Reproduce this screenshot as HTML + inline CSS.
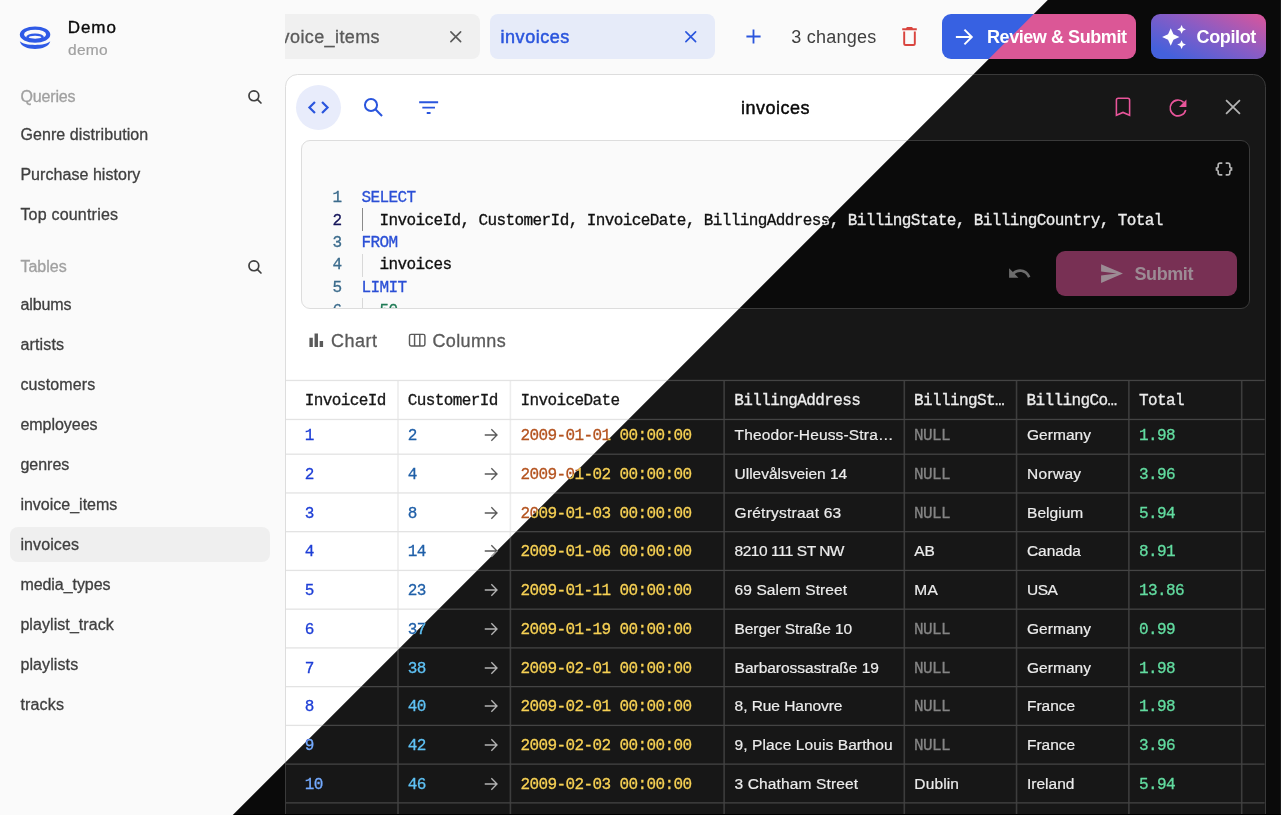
<!DOCTYPE html>
<html lang="en"><head><meta charset="utf-8"><title>invoices</title>
<style>
html,body{margin:0;padding:0;background:#fafafa;}
body{width:1281px;height:815px;overflow:hidden;position:relative;font-family:"Liberation Sans",sans-serif;}
.layer{will-change:transform;position:absolute;left:0;top:0;width:1281px;height:815px;overflow:hidden;background:var(--bg);}
.b{position:absolute;display:block;}
.t{position:absolute;white-space:pre;display:block;}
.light{--bottom:transparent;--redge:transparent;
 --bg:#fafafa;--side:#fafafa;--panel:#ffffff;--code:#fafafa;--border:#dddddd;--grid:#e3e3e3;--gridv:#ededed;
 --fg:#171717;--fg2:#3f3f3f;--fg3:#5a5a5a;--title:#0a0a0a;--muted:#a0a0a0;--sel:#efefef;
 --tab:#f0f0f0;--tabsel:#e6ebf9;--pri:#2a55dd;--danger:#d9443e;--review:#3761e2;
 --copilot:linear-gradient(25deg,#3f63e0 10%,#8a5cc4 55%,#d9559a 100%);
 --btnsel:#e8ecfb;--accent:#d6448c;--kw:#2a4fd6;--codefg:#101010;--ln:#3b6b8c;--lnact:#15155a;--num:#1f7a55;
 --guide:#d8d8d8;--guideact:#8a8a8a;--dis:#bdbdbd;--submit:#e9b6cf;--submitfg:#fff;
 --hdr:#171717;--id:#1d3ed6;--fk:#1f5fa8;--date:#b4531f;--cell:#262626;--null:#a0a0a0;--money:#1f8a55;--logo:#2f5ae6;
}
.dark{--bottom:#000;--redge:#1b1b1b;
 --bg:#0a0a0a;--side:#0a0a0a;--panel:#171717;--code:#0b0b0b;--border:#3a3a3a;--grid:#444444;--gridv:#3d3d3d;
 --fg:#ededed;--fg2:#d4d4d4;--fg3:#b4b4b4;--title:#fafafa;--muted:#737373;--sel:#262626;
 --tab:#262626;--tabsel:#3a2030;--pri:#e8629f;--danger:#ef6b63;--review:#db5796;
 --copilot:linear-gradient(25deg,#4461dc 12%,#8a5cc4 55%,#dc559a 100%);
 --btnsel:#3a2030;--accent:#e8559a;--kw:#f070a8;--codefg:#ececec;--ln:#6a8aa0;--lnact:#e0e0e0;--num:#6ad8a0;
 --guide:#333;--guideact:#777;--dis:#6c6c6c;--submit:#783054;--submitfg:#9c8b94;
 --hdr:#ececec;--id:#74aaff;--fk:#5fc2f5;--date:#f7d154;--cell:#ececec;--null:#858585;--money:#62dca0;--logo:#e8629f;
 clip-path:polygon(1047.75px 0,1281px 0,1281px 815px,232.75px 815px);
}
</style></head>
<body>
<div class="layer light">
<div class="b" style="left:0px;top:0px;width:285px;height:815px;background:var(--side)"></div>
<svg class="b" style="left:18px;top:22px" width="34" height="30" viewBox="18 22 34 30" fill="var(--logo)" fill-rule="evenodd"><path d="M19.8 34.6a15.25 8.2 0 1 0 30.5 0a15.25 8.2 0 1 0 -30.5 0Z M24 34.4a11.05 4.7 0 1 0 22.1 0a11.05 4.7 0 1 0 -22.1 0Z"/><path d="M26.2 36.95a8.85 3.55 0 1 0 17.7 0a8.85 3.55 0 1 0 -17.7 0Z M28.7 37.2a6.35 1.45 0 1 0 12.7 0a6.35 1.45 0 1 0 -12.7 0Z"/><path d="M19.8 41.2 C22 51.5, 48 51.5, 50.3 41.2 C46 46.1, 24 46.1, 19.8 41.2Z"/></svg>
<span class="t" style="left:67.80px;top:18px;font:400 17px/20px 'Liberation Sans',sans-serif;color:var(--title);letter-spacing:0.913px;-webkit-text-stroke:0.35px currentColor;">Demo</span>
<span class="t" style="left:68.00px;top:40px;font:400 15.5px/20px 'Liberation Sans',sans-serif;color:var(--muted);letter-spacing:0.307px;-webkit-text-stroke:0.2px currentColor;">demo</span>
<span class="t" style="left:20.40px;top:87px;font:400 16px/20px 'Liberation Sans',sans-serif;color:var(--muted);letter-spacing:-0.146px;-webkit-text-stroke:0.3px currentColor;">Queries</span>
<span class="t" style="left:20.40px;top:125px;font:400 16px/20px 'Liberation Sans',sans-serif;color:var(--fg2);letter-spacing:0.089px;-webkit-text-stroke:0.3px currentColor;">Genre distribution</span>
<span class="t" style="left:20.40px;top:165px;font:400 16px/20px 'Liberation Sans',sans-serif;color:var(--fg2);letter-spacing:0.052px;-webkit-text-stroke:0.3px currentColor;">Purchase history</span>
<span class="t" style="left:20.40px;top:205px;font:400 16px/20px 'Liberation Sans',sans-serif;color:var(--fg2);letter-spacing:0.203px;-webkit-text-stroke:0.3px currentColor;">Top countries</span>
<span class="t" style="left:20.40px;top:257px;font:400 16px/20px 'Liberation Sans',sans-serif;color:var(--muted);letter-spacing:0.025px;-webkit-text-stroke:0.3px currentColor;">Tables</span>
<svg class="b" style="left:246.35px;top:88.25px" width="17.8" height="17.8" viewBox="0 0 24 24" fill="none" stroke="var(--fg2)" stroke-width="2.3" stroke-linecap="round" stroke-linejoin="round"><circle cx="10.6" cy="10.6" r="6.6"/><path d="m20.2 20.2-4.9-4.9"/></svg>
<svg class="b" style="left:246.35px;top:258.25px" width="17.8" height="17.8" viewBox="0 0 24 24" fill="none" stroke="var(--fg2)" stroke-width="2.3" stroke-linecap="round" stroke-linejoin="round"><circle cx="10.6" cy="10.6" r="6.6"/><path d="m20.2 20.2-4.9-4.9"/></svg>
<div class="b" style="left:10px;top:527.3px;width:260px;height:34.6px;background:var(--sel);border-radius:8px"></div>
<span class="t" style="left:20.40px;top:295px;font:400 16px/20px 'Liberation Sans',sans-serif;color:var(--fg2);letter-spacing:-0.080px;-webkit-text-stroke:0.3px currentColor;">albums</span>
<span class="t" style="left:20.40px;top:335px;font:400 16px/20px 'Liberation Sans',sans-serif;color:var(--fg2);letter-spacing:0.175px;-webkit-text-stroke:0.3px currentColor;">artists</span>
<span class="t" style="left:20.40px;top:375px;font:400 16px/20px 'Liberation Sans',sans-serif;color:var(--fg2);letter-spacing:0.123px;-webkit-text-stroke:0.3px currentColor;">customers</span>
<span class="t" style="left:20.40px;top:415px;font:400 16px/20px 'Liberation Sans',sans-serif;color:var(--fg2);letter-spacing:-0.020px;-webkit-text-stroke:0.3px currentColor;">employees</span>
<span class="t" style="left:20.40px;top:455px;font:400 16px/20px 'Liberation Sans',sans-serif;color:var(--fg2);letter-spacing:-0.004px;-webkit-text-stroke:0.3px currentColor;">genres</span>
<span class="t" style="left:20.40px;top:495px;font:400 16px/20px 'Liberation Sans',sans-serif;color:var(--fg2);letter-spacing:-0.002px;-webkit-text-stroke:0.3px currentColor;">invoice_items</span>
<span class="t" style="left:20.40px;top:535px;font:400 16px/20px 'Liberation Sans',sans-serif;color:var(--fg2);letter-spacing:0.099px;-webkit-text-stroke:0.3px currentColor;">invoices</span>
<span class="t" style="left:20.40px;top:575px;font:400 16px/20px 'Liberation Sans',sans-serif;color:var(--fg2);letter-spacing:-0.056px;-webkit-text-stroke:0.3px currentColor;">media_types</span>
<span class="t" style="left:20.40px;top:615px;font:400 16px/20px 'Liberation Sans',sans-serif;color:var(--fg2);letter-spacing:0.073px;-webkit-text-stroke:0.3px currentColor;">playlist_track</span>
<span class="t" style="left:20.40px;top:655px;font:400 16px/20px 'Liberation Sans',sans-serif;color:var(--fg2);letter-spacing:0.110px;-webkit-text-stroke:0.3px currentColor;">playlists</span>
<span class="t" style="left:20.40px;top:695px;font:400 16px/20px 'Liberation Sans',sans-serif;color:var(--fg2);letter-spacing:0.171px;-webkit-text-stroke:0.3px currentColor;">tracks</span>
<div class="b" style="left:285px;top:14px;width:195.3px;height:45px;background:var(--tab);border-radius:0 8px 8px 0"></div>
<div class="b" style="left:285px;top:14px;width:195px;height:45px;overflow:hidden"><span class="t" style="left:-19.20px;top:13px;font:400 18px/20px 'Liberation Sans',sans-serif;color:var(--fg3);letter-spacing:0.396px;-webkit-text-stroke:0.3px currentColor;">invoice_items</span></div>
<svg class="b" style="left:445.75px;top:26.85px;color:var(--fg3)" width="19.5" height="19.5" viewBox="0 0 24 24" fill="none" stroke="var(--fg3)" stroke-width="2.0" stroke-linecap="round" stroke-linejoin="miter"><path d="M6 6 18 18M18 6 6 18"/></svg>
<div class="b" style="left:490.2px;top:14px;width:225.2px;height:45px;background:var(--tabsel);border-radius:8px"></div>
<span class="t" style="left:500.50px;top:27px;font:400 18px/20px 'Liberation Sans',sans-serif;color:var(--pri);letter-spacing:0.546px;-webkit-text-stroke:0.5px currentColor;">invoices</span>
<svg class="b" style="left:680.75px;top:26.85px;color:var(--pri)" width="19.5" height="19.5" viewBox="0 0 24 24" fill="none" stroke="var(--pri)" stroke-width="2.0" stroke-linecap="round" stroke-linejoin="miter"><path d="M6 6 18 18M18 6 6 18"/></svg>
<svg class="b" style="left:740.50px;top:23.90px;color:var(--pri)" width="25" height="25" viewBox="0 0 24 24" fill="none" stroke="var(--pri)" stroke-width="1.75" stroke-linecap="butt" stroke-linejoin="miter"><path d="M12 5.2V18.8M5.2 12H18.8"/></svg>
<span class="t" style="left:791.20px;top:27px;font:400 18px/20px 'Liberation Sans',sans-serif;color:var(--fg2);letter-spacing:0.237px;">3 changes</span>
<svg class="b" style="left:896.90px;top:23.90px;color:var(--danger)" width="25" height="25" viewBox="0 0 24 24" fill="none" stroke="var(--danger)" stroke-width="1.85" stroke-linecap="butt" stroke-linejoin="miter"><path d="M6.9 7.2V18.6a1.5 1.5 0 0 0 1.5 1.5h7.2a1.5 1.5 0 0 0 1.5-1.5V7.2M5 5.1H19M9.3 4.9 10 3.9H14L14.7 4.9" /></svg>
<div class="b" style="left:942px;top:14px;width:194.3px;height:45px;background:var(--review);border-radius:9px"></div>
<svg class="b" style="left:950.60px;top:23.50px;color:#fff" width="26" height="26" viewBox="0 0 24 24" fill="none" stroke="#fff" stroke-width="1.8" stroke-linecap="butt" stroke-linejoin="miter"><path d="M4.5 12H19M12.4 5.2 19.2 12 12.4 18.8"/></svg>
<span class="t" style="left:987.00px;top:27px;font:700 18px/20px 'Liberation Sans',sans-serif;color:#fff;letter-spacing:-0.435px;">Review &amp; Submit</span>
<div class="b" style="left:1151px;top:14px;width:114.5px;height:45px;background:var(--copilot);border-radius:9px"></div>
<svg class="b" style="left:1161.30px;top:23.50px" width="26" height="26" viewBox="0 0 24 24" fill="#fff" ><path d="M19 9l1.25-2.75L23 5l-2.75-1.25L19 1l-1.25 2.75L15 5l2.75 1.25L19 9zm-7.5.5L9 4 6.5 9.5 1 12l5.5 2.5L9 20l2.5-5.5L17 12l-5.5-2.5zM19 15l-1.25 2.75L15 19l2.75 1.25L19 23l1.25-2.75L23 19l-2.75-1.25L19 15z"/></svg>
<span class="t" style="left:1196.50px;top:27px;font:700 18px/20px 'Liberation Sans',sans-serif;color:#fff;letter-spacing:-0.354px;">Copilot</span>
<div class="b" style="left:285px;top:73.8px;width:980.5px;height:760px;background:var(--panel);border:1px solid var(--border);border-radius:12.5px;box-sizing:border-box"></div>
<div class="b" style="left:296px;top:85px;width:45px;height:45px;background:var(--btnsel);border-radius:50%"></div>
<svg class="b" style="left:306.05px;top:95.00px;color:var(--pri)" width="25" height="25" viewBox="0 0 24 24" fill="none" stroke="var(--pri)" stroke-width="2.1" stroke-linecap="butt" stroke-linejoin="miter"><path d="M8.6 6.7 3.3 12 8.6 17.3M15.4 6.7 20.7 12 15.4 17.3"/></svg>
<svg class="b" style="left:360.90px;top:95.00px;color:var(--pri)" width="25" height="25" viewBox="0 0 24 24" fill="none" stroke="var(--pri)" stroke-width="1.95" stroke-linecap="butt" stroke-linejoin="miter"><circle cx="9.6" cy="9.6" r="5.8"/><path d="M14 14 20.2 20.2"/></svg>
<svg class="b" style="left:415.95px;top:94.85px;color:var(--pri)" width="25.3" height="25.3" viewBox="0 0 24 24" fill="none" stroke="var(--pri)" stroke-width="1.75" stroke-linecap="butt" stroke-linejoin="miter"><path d="M3 6.9H21M6 12H18M10.2 17.1H13.8"/></svg>
<span class="t" style="left:741.00px;top:98px;font:400 18px/20px 'Liberation Sans',sans-serif;color:var(--title);letter-spacing:0.496px;-webkit-text-stroke:0.45px currentColor;">invoices</span>
<svg class="b" style="left:1109.50px;top:94.40px;color:var(--accent)" width="26" height="26" viewBox="0 0 24 24" fill="none" stroke="var(--accent)" stroke-width="1.45" stroke-linecap="butt" stroke-linejoin="miter"><path d="M5.9 5.6a1.7 1.7 0 0 1 1.7-1.7h8.8a1.7 1.7 0 0 1 1.7 1.7V19.7L12 17 5.9 19.7Z"/></svg>
<svg class="b" style="left:1164.70px;top:94.60px;color:var(--accent)" width="26" height="26" viewBox="0 0 24 24" fill="none" stroke="var(--accent)" stroke-width="1.5" stroke-linecap="butt" stroke-linejoin="miter"><path d="M17.2 6.8A7.3 7.3 0 1 0 19.1 13.8"/><path d="M19.8 4.2V11H13Z" fill="currentColor" stroke="none"/></svg>
<svg class="b" style="left:1219.60px;top:94.20px;color:var(--fg3)" width="26" height="26" viewBox="0 0 24 24" fill="none" stroke="var(--fg3)" stroke-width="1.6" stroke-linecap="butt" stroke-linejoin="miter"><path d="M5.6 5.6 18.4 18.4M18.4 5.6 5.6 18.4"/></svg>
<div class="b" style="left:301px;top:140.2px;width:948.5px;height:169px;background:var(--code);border:1px solid var(--border);border-radius:9px;box-sizing:border-box"></div>
<div class="b" style="left:302px;top:141px;width:946px;height:167px;overflow:hidden;border-radius:8px">
<span class="t" style="left:30.60px;top:47px;font:400 16px/20px 'Liberation Mono',monospace;color:var(--ln);letter-spacing:-0.600px;-webkit-text-stroke:0.3px currentColor;">1</span>
<span class="t" style="left:59.60px;top:47px;font:400 16px/20px 'Liberation Mono',monospace;color:var(--kw);letter-spacing:-0.600px;-webkit-text-stroke:0.3px currentColor;">SELECT</span>
<span class="t" style="left:30.60px;top:70px;font:400 16px/20px 'Liberation Mono',monospace;color:var(--lnact);letter-spacing:-0.600px;-webkit-text-stroke:0.3px currentColor;">2</span>
<span class="t" style="left:77.60px;top:70px;font:400 16px/20px 'Liberation Mono',monospace;color:var(--codefg);letter-spacing:-0.600px;-webkit-text-stroke:0.3px currentColor;">InvoiceId, CustomerId, InvoiceDate, BillingAddress, BillingState, BillingCountry, Total</span>
<div class="b" style="left:60.19999999999999px;top:67px;width:1px;height:22.5px;background:var(--guideact)"></div>
<span class="t" style="left:30.60px;top:92px;font:400 16px/20px 'Liberation Mono',monospace;color:var(--ln);letter-spacing:-0.600px;-webkit-text-stroke:0.3px currentColor;">3</span>
<span class="t" style="left:59.60px;top:92px;font:400 16px/20px 'Liberation Mono',monospace;color:var(--kw);letter-spacing:-0.600px;-webkit-text-stroke:0.3px currentColor;">FROM</span>
<span class="t" style="left:30.60px;top:114px;font:400 16px/20px 'Liberation Mono',monospace;color:var(--ln);letter-spacing:-0.600px;-webkit-text-stroke:0.3px currentColor;">4</span>
<span class="t" style="left:77.60px;top:114px;font:400 16px/20px 'Liberation Mono',monospace;color:var(--codefg);letter-spacing:-0.600px;-webkit-text-stroke:0.3px currentColor;">invoices</span>
<div class="b" style="left:60.19999999999999px;top:113px;width:1px;height:22.5px;background:var(--guide)"></div>
<span class="t" style="left:30.60px;top:137px;font:400 16px/20px 'Liberation Mono',monospace;color:var(--ln);letter-spacing:-0.600px;-webkit-text-stroke:0.3px currentColor;">5</span>
<span class="t" style="left:59.60px;top:137px;font:400 16px/20px 'Liberation Mono',monospace;color:var(--kw);letter-spacing:-0.600px;-webkit-text-stroke:0.3px currentColor;">LIMIT</span>
<span class="t" style="left:30.60px;top:160px;font:400 16px/20px 'Liberation Mono',monospace;color:var(--ln);letter-spacing:-0.600px;-webkit-text-stroke:0.3px currentColor;">6</span>
<span class="t" style="left:77.60px;top:160px;font:400 16px/20px 'Liberation Mono',monospace;color:var(--num);letter-spacing:-0.600px;-webkit-text-stroke:0.3px currentColor;">50</span>
<div class="b" style="left:60.19999999999999px;top:157px;width:1px;height:22.5px;background:var(--guide)"></div>
</div>
<svg class="b" style="left:1213.80px;top:158.50px" width="20" height="20" viewBox="0 0 24 24" fill="var(--fg3)" ><path d="M4 7v2c0 .55-.45 1-1 1H2v4h1c.55 0 1 .45 1 1v2c0 1.65 1.35 3 3 3h3v-2H7c-.55 0-1-.45-1-1v-2c0-1.3-.84-2.42-2-2.83v-.34C5.16 11.42 6 10.3 6 9V7c0-.55.45-1 1-1h3V4H7C5.35 4 4 5.35 4 7zM21 10c-.55 0-1-.45-1-1V7c0-1.65-1.35-3-3-3h-3v2h3c.55 0 1 .45 1 1v2c0 1.3.84 2.42 2 2.83v.34c-1.16.41-2 1.52-2 2.83v2c0 .55-.45 1-1 1h-3v2h3c1.65 0 3-1.35 3-3v-2c0-.55.45-1 1-1h1v-4h-1z"/></svg>
<svg class="b" style="left:1006.50px;top:260.50px" width="25" height="25" viewBox="0 0 24 24" fill="var(--dis)" ><path d="M12.5 8c-2.65 0-5.05.99-6.9 2.6L2 7v9h9l-3.62-3.62c1.39-1.16 3.16-1.88 5.12-1.88 3.54 0 6.55 2.31 7.6 5.5l2.37-.78C21.08 11.03 17.15 8 12.5 8z"/></svg>
<div class="b" style="left:1056.4px;top:251px;width:180.4px;height:44.6px;background:var(--submit);border-radius:9px"></div>
<svg class="b" style="left:1099.00px;top:260.80px" width="25" height="25" viewBox="0 0 24 24" fill="var(--submitfg)" ><path d="M2.01 21L23 12 2.01 3 2 10l15 2-15 2z"/></svg>
<span class="t" style="left:1134.50px;top:264px;font:700 18px/20px 'Liberation Sans',sans-serif;color:var(--submitfg);letter-spacing:-0.416px;">Submit</span>
<svg class="b" style="left:305.75px;top:329.75px" width="20.5" height="20.5" viewBox="0 0 24 24" fill="var(--fg3)" ><path d="M4 9h4v11H4zm12 4h4v7h-4zm-6-9h4v16h-4z"/></svg>
<span class="t" style="left:331.00px;top:331px;font:400 18px/20px 'Liberation Sans',sans-serif;color:var(--fg3);letter-spacing:0.497px;-webkit-text-stroke:0.3px currentColor;">Chart</span>
<svg class="b" style="left:406.30px;top:328.95px;color:var(--fg3)" width="22.4" height="22.4" viewBox="0 0 24 24" fill="none" stroke="var(--fg3)" stroke-width="1.55" stroke-linecap="butt" stroke-linejoin="miter"><rect x="3.75" y="5.75" width="16.5" height="12.5" rx="1.8"/><path d="M9.2 5.75V18.25M14.8 5.75V18.25"/></svg>
<span class="t" style="left:432.50px;top:331px;font:400 18px/20px 'Liberation Sans',sans-serif;color:var(--fg3);letter-spacing:0.354px;-webkit-text-stroke:0.3px currentColor;">Columns</span>
<svg class="b" style="left:0;top:0" width="1281" height="815" viewBox="0 0 1281 815"><rect x="397.20" y="380.4" width="1.6" height="440" fill="var(--gridv)"/><rect x="509.60" y="380.4" width="1.6" height="440" fill="var(--gridv)"/><rect x="723.30" y="380.4" width="1.6" height="440" fill="var(--gridv)"/><rect x="903.50" y="380.4" width="1.6" height="440" fill="var(--gridv)"/><rect x="1015.75" y="380.4" width="1.6" height="440" fill="var(--gridv)"/><rect x="1128.10" y="380.4" width="1.6" height="440" fill="var(--gridv)"/><rect x="1240.90" y="380.4" width="1.6" height="440" fill="var(--gridv)"/><rect x="286" y="379.80" width="978.6" height="1.3" fill="var(--grid)"/><rect x="286" y="418.80" width="978.6" height="1.3" fill="var(--grid)"/><rect x="286" y="453.55" width="978.6" height="1.3" fill="var(--grid)"/><rect x="286" y="492.29" width="978.6" height="1.3" fill="var(--grid)"/><rect x="286" y="531.03" width="978.6" height="1.3" fill="var(--grid)"/><rect x="286" y="569.77" width="978.6" height="1.3" fill="var(--grid)"/><rect x="286" y="608.51" width="978.6" height="1.3" fill="var(--grid)"/><rect x="286" y="647.25" width="978.6" height="1.3" fill="var(--grid)"/><rect x="286" y="685.99" width="978.6" height="1.3" fill="var(--grid)"/><rect x="286" y="724.73" width="978.6" height="1.3" fill="var(--grid)"/><rect x="286" y="763.47" width="978.6" height="1.3" fill="var(--grid)"/><rect x="286" y="802.21" width="978.6" height="1.3" fill="var(--grid)"/><rect x="286" y="840.95" width="978.6" height="1.3" fill="var(--grid)"/></svg>
<span class="t" style="left:304.80px;top:391px;font:400 16px/20px 'Liberation Mono',monospace;color:var(--hdr);letter-spacing:-0.600px;-webkit-text-stroke:0.3px currentColor;">InvoiceId</span>
<span class="t" style="left:407.70px;top:391px;font:400 16px/20px 'Liberation Mono',monospace;color:var(--hdr);letter-spacing:-0.600px;-webkit-text-stroke:0.3px currentColor;">CustomerId</span>
<span class="t" style="left:520.50px;top:391px;font:400 16px/20px 'Liberation Mono',monospace;color:var(--hdr);letter-spacing:-0.600px;-webkit-text-stroke:0.3px currentColor;">InvoiceDate</span>
<span class="t" style="left:734.20px;top:391px;font:400 16px/20px 'Liberation Mono',monospace;color:var(--hdr);letter-spacing:-0.600px;-webkit-text-stroke:0.3px currentColor;">BillingAddress</span>
<span class="t" style="left:914.00px;top:391px;font:400 16px/20px 'Liberation Mono',monospace;color:var(--hdr);letter-spacing:-0.600px;-webkit-text-stroke:0.3px currentColor;">BillingSt…</span>
<span class="t" style="left:1026.40px;top:391px;font:400 16px/20px 'Liberation Mono',monospace;color:var(--hdr);letter-spacing:-0.600px;-webkit-text-stroke:0.3px currentColor;">BillingCo…</span>
<span class="t" style="left:1139.00px;top:391px;font:400 16px/20px 'Liberation Mono',monospace;color:var(--hdr);letter-spacing:-0.600px;-webkit-text-stroke:0.3px currentColor;">Total</span>
<span class="t" style="left:304.80px;top:426px;font:400 16px/20px 'Liberation Mono',monospace;color:var(--id);letter-spacing:-0.600px;-webkit-text-stroke:0.3px currentColor;">1</span>
<span class="t" style="left:407.70px;top:426px;font:400 16px/20px 'Liberation Mono',monospace;color:var(--fk);letter-spacing:-0.600px;-webkit-text-stroke:0.3px currentColor;">2</span>
<svg class="b" style="left:480.60px;top:425.20px;color:var(--fg3)" width="20" height="20" viewBox="0 0 24 24" fill="none" stroke="var(--fg3)" stroke-width="1.6" stroke-linecap="butt" stroke-linejoin="miter"><path d="M4.5 12H19M12.4 5.2 19.2 12 12.4 18.8"/></svg>
<span class="t" style="left:520.50px;top:426px;font:400 16px/20px 'Liberation Mono',monospace;color:var(--date);letter-spacing:-0.600px;-webkit-text-stroke:0.3px currentColor;">2009-01-01 00:00:00</span>
<span class="t" style="left:734.60px;top:425px;font:400 15.5px/20px 'Liberation Sans',sans-serif;color:var(--cell);letter-spacing:0.162px;-webkit-text-stroke:0.2px currentColor;">Theodor-Heuss-Stra…</span>
<span class="t" style="left:914.00px;top:426px;font:400 16px/20px 'Liberation Mono',monospace;color:var(--null);letter-spacing:-0.600px;-webkit-text-stroke:0.3px currentColor;">NULL</span>
<span class="t" style="left:1027.00px;top:425px;font:400 15.5px/20px 'Liberation Sans',sans-serif;color:var(--cell);letter-spacing:0.037px;-webkit-text-stroke:0.2px currentColor;">Germany</span>
<span class="t" style="left:1139.00px;top:426px;font:400 16px/20px 'Liberation Mono',monospace;color:var(--money);letter-spacing:-0.600px;-webkit-text-stroke:0.3px currentColor;">1.98</span>
<span class="t" style="left:304.80px;top:465px;font:400 16px/20px 'Liberation Mono',monospace;color:var(--id);letter-spacing:-0.600px;-webkit-text-stroke:0.3px currentColor;">2</span>
<span class="t" style="left:407.70px;top:465px;font:400 16px/20px 'Liberation Mono',monospace;color:var(--fk);letter-spacing:-0.600px;-webkit-text-stroke:0.3px currentColor;">4</span>
<svg class="b" style="left:480.60px;top:463.94px;color:var(--fg3)" width="20" height="20" viewBox="0 0 24 24" fill="none" stroke="var(--fg3)" stroke-width="1.6" stroke-linecap="butt" stroke-linejoin="miter"><path d="M4.5 12H19M12.4 5.2 19.2 12 12.4 18.8"/></svg>
<span class="t" style="left:520.50px;top:465px;font:400 16px/20px 'Liberation Mono',monospace;color:var(--date);letter-spacing:-0.600px;-webkit-text-stroke:0.3px currentColor;">2009-01-02 00:00:00</span>
<span class="t" style="left:734.60px;top:464px;font:400 15.5px/20px 'Liberation Sans',sans-serif;color:var(--cell);letter-spacing:-0.017px;-webkit-text-stroke:0.2px currentColor;">Ullevålsveien 14</span>
<span class="t" style="left:914.00px;top:465px;font:400 16px/20px 'Liberation Mono',monospace;color:var(--null);letter-spacing:-0.600px;-webkit-text-stroke:0.3px currentColor;">NULL</span>
<span class="t" style="left:1027.00px;top:464px;font:400 15.5px/20px 'Liberation Sans',sans-serif;color:var(--cell);letter-spacing:0.310px;-webkit-text-stroke:0.2px currentColor;">Norway</span>
<span class="t" style="left:1139.00px;top:465px;font:400 16px/20px 'Liberation Mono',monospace;color:var(--money);letter-spacing:-0.600px;-webkit-text-stroke:0.3px currentColor;">3.96</span>
<span class="t" style="left:304.80px;top:504px;font:400 16px/20px 'Liberation Mono',monospace;color:var(--id);letter-spacing:-0.600px;-webkit-text-stroke:0.3px currentColor;">3</span>
<span class="t" style="left:407.70px;top:504px;font:400 16px/20px 'Liberation Mono',monospace;color:var(--fk);letter-spacing:-0.600px;-webkit-text-stroke:0.3px currentColor;">8</span>
<svg class="b" style="left:480.60px;top:502.68px;color:var(--fg3)" width="20" height="20" viewBox="0 0 24 24" fill="none" stroke="var(--fg3)" stroke-width="1.6" stroke-linecap="butt" stroke-linejoin="miter"><path d="M4.5 12H19M12.4 5.2 19.2 12 12.4 18.8"/></svg>
<span class="t" style="left:520.50px;top:504px;font:400 16px/20px 'Liberation Mono',monospace;color:var(--date);letter-spacing:-0.600px;-webkit-text-stroke:0.3px currentColor;">2009-01-03 00:00:00</span>
<span class="t" style="left:734.60px;top:503px;font:400 15.5px/20px 'Liberation Sans',sans-serif;color:var(--cell);letter-spacing:0.229px;-webkit-text-stroke:0.2px currentColor;">Grétrystraat 63</span>
<span class="t" style="left:914.00px;top:504px;font:400 16px/20px 'Liberation Mono',monospace;color:var(--null);letter-spacing:-0.600px;-webkit-text-stroke:0.3px currentColor;">NULL</span>
<span class="t" style="left:1027.00px;top:503px;font:400 15.5px/20px 'Liberation Sans',sans-serif;color:var(--cell);letter-spacing:0.043px;-webkit-text-stroke:0.2px currentColor;">Belgium</span>
<span class="t" style="left:1139.00px;top:504px;font:400 16px/20px 'Liberation Mono',monospace;color:var(--money);letter-spacing:-0.600px;-webkit-text-stroke:0.3px currentColor;">5.94</span>
<span class="t" style="left:304.80px;top:542px;font:400 16px/20px 'Liberation Mono',monospace;color:var(--id);letter-spacing:-0.600px;-webkit-text-stroke:0.3px currentColor;">4</span>
<span class="t" style="left:407.70px;top:542px;font:400 16px/20px 'Liberation Mono',monospace;color:var(--fk);letter-spacing:-0.600px;-webkit-text-stroke:0.3px currentColor;">14</span>
<svg class="b" style="left:480.60px;top:541.42px;color:var(--fg3)" width="20" height="20" viewBox="0 0 24 24" fill="none" stroke="var(--fg3)" stroke-width="1.6" stroke-linecap="butt" stroke-linejoin="miter"><path d="M4.5 12H19M12.4 5.2 19.2 12 12.4 18.8"/></svg>
<span class="t" style="left:520.50px;top:542px;font:400 16px/20px 'Liberation Mono',monospace;color:var(--date);letter-spacing:-0.600px;-webkit-text-stroke:0.3px currentColor;">2009-01-06 00:00:00</span>
<span class="t" style="left:734.60px;top:541px;font:400 15.5px/20px 'Liberation Sans',sans-serif;color:var(--cell);letter-spacing:-0.494px;-webkit-text-stroke:0.2px currentColor;">8210 111 ST NW</span>
<span class="t" style="left:914.30px;top:541px;font:400 15.5px/20px 'Liberation Sans',sans-serif;color:var(--cell);letter-spacing:-0.238px;-webkit-text-stroke:0.2px currentColor;">AB</span>
<span class="t" style="left:1027.00px;top:541px;font:400 15.5px/20px 'Liberation Sans',sans-serif;color:var(--cell);letter-spacing:-0.083px;-webkit-text-stroke:0.2px currentColor;">Canada</span>
<span class="t" style="left:1139.00px;top:542px;font:400 16px/20px 'Liberation Mono',monospace;color:var(--money);letter-spacing:-0.600px;-webkit-text-stroke:0.3px currentColor;">8.91</span>
<span class="t" style="left:304.80px;top:581px;font:400 16px/20px 'Liberation Mono',monospace;color:var(--id);letter-spacing:-0.600px;-webkit-text-stroke:0.3px currentColor;">5</span>
<span class="t" style="left:407.70px;top:581px;font:400 16px/20px 'Liberation Mono',monospace;color:var(--fk);letter-spacing:-0.600px;-webkit-text-stroke:0.3px currentColor;">23</span>
<svg class="b" style="left:480.60px;top:580.16px;color:var(--fg3)" width="20" height="20" viewBox="0 0 24 24" fill="none" stroke="var(--fg3)" stroke-width="1.6" stroke-linecap="butt" stroke-linejoin="miter"><path d="M4.5 12H19M12.4 5.2 19.2 12 12.4 18.8"/></svg>
<span class="t" style="left:520.50px;top:581px;font:400 16px/20px 'Liberation Mono',monospace;color:var(--date);letter-spacing:-0.600px;-webkit-text-stroke:0.3px currentColor;">2009-01-11 00:00:00</span>
<span class="t" style="left:734.60px;top:580px;font:400 15.5px/20px 'Liberation Sans',sans-serif;color:var(--cell);letter-spacing:0.097px;-webkit-text-stroke:0.2px currentColor;">69 Salem Street</span>
<span class="t" style="left:914.30px;top:580px;font:400 15.5px/20px 'Liberation Sans',sans-serif;color:var(--cell);letter-spacing:0.225px;-webkit-text-stroke:0.2px currentColor;">MA</span>
<span class="t" style="left:1027.00px;top:580px;font:400 15.5px/20px 'Liberation Sans',sans-serif;color:var(--cell);letter-spacing:-0.490px;-webkit-text-stroke:0.2px currentColor;">USA</span>
<span class="t" style="left:1139.00px;top:581px;font:400 16px/20px 'Liberation Mono',monospace;color:var(--money);letter-spacing:-0.600px;-webkit-text-stroke:0.3px currentColor;">13.86</span>
<span class="t" style="left:304.80px;top:620px;font:400 16px/20px 'Liberation Mono',monospace;color:var(--id);letter-spacing:-0.600px;-webkit-text-stroke:0.3px currentColor;">6</span>
<span class="t" style="left:407.70px;top:620px;font:400 16px/20px 'Liberation Mono',monospace;color:var(--fk);letter-spacing:-0.600px;-webkit-text-stroke:0.3px currentColor;">37</span>
<svg class="b" style="left:480.60px;top:618.90px;color:var(--fg3)" width="20" height="20" viewBox="0 0 24 24" fill="none" stroke="var(--fg3)" stroke-width="1.6" stroke-linecap="butt" stroke-linejoin="miter"><path d="M4.5 12H19M12.4 5.2 19.2 12 12.4 18.8"/></svg>
<span class="t" style="left:520.50px;top:620px;font:400 16px/20px 'Liberation Mono',monospace;color:var(--date);letter-spacing:-0.600px;-webkit-text-stroke:0.3px currentColor;">2009-01-19 00:00:00</span>
<span class="t" style="left:734.60px;top:619px;font:400 15.5px/20px 'Liberation Sans',sans-serif;color:var(--cell);letter-spacing:-0.093px;-webkit-text-stroke:0.2px currentColor;">Berger Straße 10</span>
<span class="t" style="left:914.00px;top:620px;font:400 16px/20px 'Liberation Mono',monospace;color:var(--null);letter-spacing:-0.600px;-webkit-text-stroke:0.3px currentColor;">NULL</span>
<span class="t" style="left:1027.00px;top:619px;font:400 15.5px/20px 'Liberation Sans',sans-serif;color:var(--cell);letter-spacing:0.037px;-webkit-text-stroke:0.2px currentColor;">Germany</span>
<span class="t" style="left:1139.00px;top:620px;font:400 16px/20px 'Liberation Mono',monospace;color:var(--money);letter-spacing:-0.600px;-webkit-text-stroke:0.3px currentColor;">0.99</span>
<span class="t" style="left:304.80px;top:659px;font:400 16px/20px 'Liberation Mono',monospace;color:var(--id);letter-spacing:-0.600px;-webkit-text-stroke:0.3px currentColor;">7</span>
<span class="t" style="left:407.70px;top:659px;font:400 16px/20px 'Liberation Mono',monospace;color:var(--fk);letter-spacing:-0.600px;-webkit-text-stroke:0.3px currentColor;">38</span>
<svg class="b" style="left:480.60px;top:657.64px;color:var(--fg3)" width="20" height="20" viewBox="0 0 24 24" fill="none" stroke="var(--fg3)" stroke-width="1.6" stroke-linecap="butt" stroke-linejoin="miter"><path d="M4.5 12H19M12.4 5.2 19.2 12 12.4 18.8"/></svg>
<span class="t" style="left:520.50px;top:659px;font:400 16px/20px 'Liberation Mono',monospace;color:var(--date);letter-spacing:-0.600px;-webkit-text-stroke:0.3px currentColor;">2009-02-01 00:00:00</span>
<span class="t" style="left:734.60px;top:658px;font:400 15.5px/20px 'Liberation Sans',sans-serif;color:var(--cell);letter-spacing:-0.023px;-webkit-text-stroke:0.2px currentColor;">Barbarossastraße 19</span>
<span class="t" style="left:914.00px;top:659px;font:400 16px/20px 'Liberation Mono',monospace;color:var(--null);letter-spacing:-0.600px;-webkit-text-stroke:0.3px currentColor;">NULL</span>
<span class="t" style="left:1027.00px;top:658px;font:400 15.5px/20px 'Liberation Sans',sans-serif;color:var(--cell);letter-spacing:0.037px;-webkit-text-stroke:0.2px currentColor;">Germany</span>
<span class="t" style="left:1139.00px;top:659px;font:400 16px/20px 'Liberation Mono',monospace;color:var(--money);letter-spacing:-0.600px;-webkit-text-stroke:0.3px currentColor;">1.98</span>
<span class="t" style="left:304.80px;top:697px;font:400 16px/20px 'Liberation Mono',monospace;color:var(--id);letter-spacing:-0.600px;-webkit-text-stroke:0.3px currentColor;">8</span>
<span class="t" style="left:407.70px;top:697px;font:400 16px/20px 'Liberation Mono',monospace;color:var(--fk);letter-spacing:-0.600px;-webkit-text-stroke:0.3px currentColor;">40</span>
<svg class="b" style="left:480.60px;top:696.38px;color:var(--fg3)" width="20" height="20" viewBox="0 0 24 24" fill="none" stroke="var(--fg3)" stroke-width="1.6" stroke-linecap="butt" stroke-linejoin="miter"><path d="M4.5 12H19M12.4 5.2 19.2 12 12.4 18.8"/></svg>
<span class="t" style="left:520.50px;top:697px;font:400 16px/20px 'Liberation Mono',monospace;color:var(--date);letter-spacing:-0.600px;-webkit-text-stroke:0.3px currentColor;">2009-02-01 00:00:00</span>
<span class="t" style="left:734.60px;top:696px;font:400 15.5px/20px 'Liberation Sans',sans-serif;color:var(--cell);letter-spacing:-0.054px;-webkit-text-stroke:0.2px currentColor;">8, Rue Hanovre</span>
<span class="t" style="left:914.00px;top:697px;font:400 16px/20px 'Liberation Mono',monospace;color:var(--null);letter-spacing:-0.600px;-webkit-text-stroke:0.3px currentColor;">NULL</span>
<span class="t" style="left:1027.00px;top:696px;font:400 15.5px/20px 'Liberation Sans',sans-serif;color:var(--cell);letter-spacing:-0.040px;-webkit-text-stroke:0.2px currentColor;">France</span>
<span class="t" style="left:1139.00px;top:697px;font:400 16px/20px 'Liberation Mono',monospace;color:var(--money);letter-spacing:-0.600px;-webkit-text-stroke:0.3px currentColor;">1.98</span>
<span class="t" style="left:304.80px;top:736px;font:400 16px/20px 'Liberation Mono',monospace;color:var(--id);letter-spacing:-0.600px;-webkit-text-stroke:0.3px currentColor;">9</span>
<span class="t" style="left:407.70px;top:736px;font:400 16px/20px 'Liberation Mono',monospace;color:var(--fk);letter-spacing:-0.600px;-webkit-text-stroke:0.3px currentColor;">42</span>
<svg class="b" style="left:480.60px;top:735.12px;color:var(--fg3)" width="20" height="20" viewBox="0 0 24 24" fill="none" stroke="var(--fg3)" stroke-width="1.6" stroke-linecap="butt" stroke-linejoin="miter"><path d="M4.5 12H19M12.4 5.2 19.2 12 12.4 18.8"/></svg>
<span class="t" style="left:520.50px;top:736px;font:400 16px/20px 'Liberation Mono',monospace;color:var(--date);letter-spacing:-0.600px;-webkit-text-stroke:0.3px currentColor;">2009-02-02 00:00:00</span>
<span class="t" style="left:734.60px;top:735px;font:400 15.5px/20px 'Liberation Sans',sans-serif;color:var(--cell);letter-spacing:0.097px;-webkit-text-stroke:0.2px currentColor;">9, Place Louis Barthou</span>
<span class="t" style="left:914.00px;top:736px;font:400 16px/20px 'Liberation Mono',monospace;color:var(--null);letter-spacing:-0.600px;-webkit-text-stroke:0.3px currentColor;">NULL</span>
<span class="t" style="left:1027.00px;top:735px;font:400 15.5px/20px 'Liberation Sans',sans-serif;color:var(--cell);letter-spacing:-0.040px;-webkit-text-stroke:0.2px currentColor;">France</span>
<span class="t" style="left:1139.00px;top:736px;font:400 16px/20px 'Liberation Mono',monospace;color:var(--money);letter-spacing:-0.600px;-webkit-text-stroke:0.3px currentColor;">3.96</span>
<span class="t" style="left:304.80px;top:775px;font:400 16px/20px 'Liberation Mono',monospace;color:var(--id);letter-spacing:-0.600px;-webkit-text-stroke:0.3px currentColor;">10</span>
<span class="t" style="left:407.70px;top:775px;font:400 16px/20px 'Liberation Mono',monospace;color:var(--fk);letter-spacing:-0.600px;-webkit-text-stroke:0.3px currentColor;">46</span>
<svg class="b" style="left:480.60px;top:773.86px;color:var(--fg3)" width="20" height="20" viewBox="0 0 24 24" fill="none" stroke="var(--fg3)" stroke-width="1.6" stroke-linecap="butt" stroke-linejoin="miter"><path d="M4.5 12H19M12.4 5.2 19.2 12 12.4 18.8"/></svg>
<span class="t" style="left:520.50px;top:775px;font:400 16px/20px 'Liberation Mono',monospace;color:var(--date);letter-spacing:-0.600px;-webkit-text-stroke:0.3px currentColor;">2009-02-03 00:00:00</span>
<span class="t" style="left:734.60px;top:774px;font:400 15.5px/20px 'Liberation Sans',sans-serif;color:var(--cell);letter-spacing:0.126px;-webkit-text-stroke:0.2px currentColor;">3 Chatham Street</span>
<span class="t" style="left:914.30px;top:774px;font:400 15.5px/20px 'Liberation Sans',sans-serif;color:var(--cell);letter-spacing:0.143px;-webkit-text-stroke:0.2px currentColor;">Dublin</span>
<span class="t" style="left:1027.00px;top:774px;font:400 15.5px/20px 'Liberation Sans',sans-serif;color:var(--cell);letter-spacing:0.001px;-webkit-text-stroke:0.2px currentColor;">Ireland</span>
<span class="t" style="left:1139.00px;top:775px;font:400 16px/20px 'Liberation Mono',monospace;color:var(--money);letter-spacing:-0.600px;-webkit-text-stroke:0.3px currentColor;">5.94</span>
<div class="b" style="left:1279.8px;top:0px;width:1.3px;height:815px;background:var(--redge)"></div>
<div class="b" style="left:0px;top:813.9px;width:1281px;height:1.2px;background:var(--bottom)"></div>
</div>
<div class="layer dark">
<div class="b" style="left:0px;top:0px;width:285px;height:815px;background:var(--side)"></div>
<svg class="b" style="left:18px;top:22px" width="34" height="30" viewBox="18 22 34 30" fill="var(--logo)" fill-rule="evenodd"><path d="M19.8 34.6a15.25 8.2 0 1 0 30.5 0a15.25 8.2 0 1 0 -30.5 0Z M24 34.4a11.05 4.7 0 1 0 22.1 0a11.05 4.7 0 1 0 -22.1 0Z"/><path d="M26.2 36.95a8.85 3.55 0 1 0 17.7 0a8.85 3.55 0 1 0 -17.7 0Z M28.7 37.2a6.35 1.45 0 1 0 12.7 0a6.35 1.45 0 1 0 -12.7 0Z"/><path d="M19.8 41.2 C22 51.5, 48 51.5, 50.3 41.2 C46 46.1, 24 46.1, 19.8 41.2Z"/></svg>
<span class="t" style="left:67.80px;top:18px;font:400 17px/20px 'Liberation Sans',sans-serif;color:var(--title);letter-spacing:0.913px;-webkit-text-stroke:0.35px currentColor;">Demo</span>
<span class="t" style="left:68.00px;top:40px;font:400 15.5px/20px 'Liberation Sans',sans-serif;color:var(--muted);letter-spacing:0.307px;-webkit-text-stroke:0.2px currentColor;">demo</span>
<span class="t" style="left:20.40px;top:87px;font:400 16px/20px 'Liberation Sans',sans-serif;color:var(--muted);letter-spacing:-0.146px;-webkit-text-stroke:0.3px currentColor;">Queries</span>
<span class="t" style="left:20.40px;top:125px;font:400 16px/20px 'Liberation Sans',sans-serif;color:var(--fg2);letter-spacing:0.089px;-webkit-text-stroke:0.3px currentColor;">Genre distribution</span>
<span class="t" style="left:20.40px;top:165px;font:400 16px/20px 'Liberation Sans',sans-serif;color:var(--fg2);letter-spacing:0.052px;-webkit-text-stroke:0.3px currentColor;">Purchase history</span>
<span class="t" style="left:20.40px;top:205px;font:400 16px/20px 'Liberation Sans',sans-serif;color:var(--fg2);letter-spacing:0.203px;-webkit-text-stroke:0.3px currentColor;">Top countries</span>
<span class="t" style="left:20.40px;top:257px;font:400 16px/20px 'Liberation Sans',sans-serif;color:var(--muted);letter-spacing:0.025px;-webkit-text-stroke:0.3px currentColor;">Tables</span>
<svg class="b" style="left:246.35px;top:88.25px" width="17.8" height="17.8" viewBox="0 0 24 24" fill="none" stroke="var(--fg2)" stroke-width="2.3" stroke-linecap="round" stroke-linejoin="round"><circle cx="10.6" cy="10.6" r="6.6"/><path d="m20.2 20.2-4.9-4.9"/></svg>
<svg class="b" style="left:246.35px;top:258.25px" width="17.8" height="17.8" viewBox="0 0 24 24" fill="none" stroke="var(--fg2)" stroke-width="2.3" stroke-linecap="round" stroke-linejoin="round"><circle cx="10.6" cy="10.6" r="6.6"/><path d="m20.2 20.2-4.9-4.9"/></svg>
<div class="b" style="left:10px;top:527.3px;width:260px;height:34.6px;background:var(--sel);border-radius:8px"></div>
<span class="t" style="left:20.40px;top:295px;font:400 16px/20px 'Liberation Sans',sans-serif;color:var(--fg2);letter-spacing:-0.080px;-webkit-text-stroke:0.3px currentColor;">albums</span>
<span class="t" style="left:20.40px;top:335px;font:400 16px/20px 'Liberation Sans',sans-serif;color:var(--fg2);letter-spacing:0.175px;-webkit-text-stroke:0.3px currentColor;">artists</span>
<span class="t" style="left:20.40px;top:375px;font:400 16px/20px 'Liberation Sans',sans-serif;color:var(--fg2);letter-spacing:0.123px;-webkit-text-stroke:0.3px currentColor;">customers</span>
<span class="t" style="left:20.40px;top:415px;font:400 16px/20px 'Liberation Sans',sans-serif;color:var(--fg2);letter-spacing:-0.020px;-webkit-text-stroke:0.3px currentColor;">employees</span>
<span class="t" style="left:20.40px;top:455px;font:400 16px/20px 'Liberation Sans',sans-serif;color:var(--fg2);letter-spacing:-0.004px;-webkit-text-stroke:0.3px currentColor;">genres</span>
<span class="t" style="left:20.40px;top:495px;font:400 16px/20px 'Liberation Sans',sans-serif;color:var(--fg2);letter-spacing:-0.002px;-webkit-text-stroke:0.3px currentColor;">invoice_items</span>
<span class="t" style="left:20.40px;top:535px;font:400 16px/20px 'Liberation Sans',sans-serif;color:var(--fg2);letter-spacing:0.099px;-webkit-text-stroke:0.3px currentColor;">invoices</span>
<span class="t" style="left:20.40px;top:575px;font:400 16px/20px 'Liberation Sans',sans-serif;color:var(--fg2);letter-spacing:-0.056px;-webkit-text-stroke:0.3px currentColor;">media_types</span>
<span class="t" style="left:20.40px;top:615px;font:400 16px/20px 'Liberation Sans',sans-serif;color:var(--fg2);letter-spacing:0.073px;-webkit-text-stroke:0.3px currentColor;">playlist_track</span>
<span class="t" style="left:20.40px;top:655px;font:400 16px/20px 'Liberation Sans',sans-serif;color:var(--fg2);letter-spacing:0.110px;-webkit-text-stroke:0.3px currentColor;">playlists</span>
<span class="t" style="left:20.40px;top:695px;font:400 16px/20px 'Liberation Sans',sans-serif;color:var(--fg2);letter-spacing:0.171px;-webkit-text-stroke:0.3px currentColor;">tracks</span>
<div class="b" style="left:285px;top:14px;width:195.3px;height:45px;background:var(--tab);border-radius:0 8px 8px 0"></div>
<div class="b" style="left:285px;top:14px;width:195px;height:45px;overflow:hidden"><span class="t" style="left:-19.20px;top:13px;font:400 18px/20px 'Liberation Sans',sans-serif;color:var(--fg3);letter-spacing:0.396px;-webkit-text-stroke:0.3px currentColor;">invoice_items</span></div>
<svg class="b" style="left:445.75px;top:26.85px;color:var(--fg3)" width="19.5" height="19.5" viewBox="0 0 24 24" fill="none" stroke="var(--fg3)" stroke-width="2.0" stroke-linecap="round" stroke-linejoin="miter"><path d="M6 6 18 18M18 6 6 18"/></svg>
<div class="b" style="left:490.2px;top:14px;width:225.2px;height:45px;background:var(--tabsel);border-radius:8px"></div>
<span class="t" style="left:500.50px;top:27px;font:400 18px/20px 'Liberation Sans',sans-serif;color:var(--pri);letter-spacing:0.546px;-webkit-text-stroke:0.5px currentColor;">invoices</span>
<svg class="b" style="left:680.75px;top:26.85px;color:var(--pri)" width="19.5" height="19.5" viewBox="0 0 24 24" fill="none" stroke="var(--pri)" stroke-width="2.0" stroke-linecap="round" stroke-linejoin="miter"><path d="M6 6 18 18M18 6 6 18"/></svg>
<svg class="b" style="left:740.50px;top:23.90px;color:var(--pri)" width="25" height="25" viewBox="0 0 24 24" fill="none" stroke="var(--pri)" stroke-width="1.75" stroke-linecap="butt" stroke-linejoin="miter"><path d="M12 5.2V18.8M5.2 12H18.8"/></svg>
<span class="t" style="left:791.20px;top:27px;font:400 18px/20px 'Liberation Sans',sans-serif;color:var(--fg2);letter-spacing:0.237px;">3 changes</span>
<svg class="b" style="left:896.90px;top:23.90px;color:var(--danger)" width="25" height="25" viewBox="0 0 24 24" fill="none" stroke="var(--danger)" stroke-width="1.85" stroke-linecap="butt" stroke-linejoin="miter"><path d="M6.9 7.2V18.6a1.5 1.5 0 0 0 1.5 1.5h7.2a1.5 1.5 0 0 0 1.5-1.5V7.2M5 5.1H19M9.3 4.9 10 3.9H14L14.7 4.9" /></svg>
<div class="b" style="left:942px;top:14px;width:194.3px;height:45px;background:var(--review);border-radius:9px"></div>
<svg class="b" style="left:950.60px;top:23.50px;color:#fff" width="26" height="26" viewBox="0 0 24 24" fill="none" stroke="#fff" stroke-width="1.8" stroke-linecap="butt" stroke-linejoin="miter"><path d="M4.5 12H19M12.4 5.2 19.2 12 12.4 18.8"/></svg>
<span class="t" style="left:987.00px;top:27px;font:700 18px/20px 'Liberation Sans',sans-serif;color:#fff;letter-spacing:-0.435px;">Review &amp; Submit</span>
<div class="b" style="left:1151px;top:14px;width:114.5px;height:45px;background:var(--copilot);border-radius:9px"></div>
<svg class="b" style="left:1161.30px;top:23.50px" width="26" height="26" viewBox="0 0 24 24" fill="#fff" ><path d="M19 9l1.25-2.75L23 5l-2.75-1.25L19 1l-1.25 2.75L15 5l2.75 1.25L19 9zm-7.5.5L9 4 6.5 9.5 1 12l5.5 2.5L9 20l2.5-5.5L17 12l-5.5-2.5zM19 15l-1.25 2.75L15 19l2.75 1.25L19 23l1.25-2.75L23 19l-2.75-1.25L19 15z"/></svg>
<span class="t" style="left:1196.50px;top:27px;font:700 18px/20px 'Liberation Sans',sans-serif;color:#fff;letter-spacing:-0.354px;">Copilot</span>
<div class="b" style="left:285px;top:73.8px;width:980.5px;height:760px;background:var(--panel);border:1px solid var(--border);border-radius:12.5px;box-sizing:border-box"></div>
<div class="b" style="left:296px;top:85px;width:45px;height:45px;background:var(--btnsel);border-radius:50%"></div>
<svg class="b" style="left:306.05px;top:95.00px;color:var(--pri)" width="25" height="25" viewBox="0 0 24 24" fill="none" stroke="var(--pri)" stroke-width="2.1" stroke-linecap="butt" stroke-linejoin="miter"><path d="M8.6 6.7 3.3 12 8.6 17.3M15.4 6.7 20.7 12 15.4 17.3"/></svg>
<svg class="b" style="left:360.90px;top:95.00px;color:var(--pri)" width="25" height="25" viewBox="0 0 24 24" fill="none" stroke="var(--pri)" stroke-width="1.95" stroke-linecap="butt" stroke-linejoin="miter"><circle cx="9.6" cy="9.6" r="5.8"/><path d="M14 14 20.2 20.2"/></svg>
<svg class="b" style="left:415.95px;top:94.85px;color:var(--pri)" width="25.3" height="25.3" viewBox="0 0 24 24" fill="none" stroke="var(--pri)" stroke-width="1.75" stroke-linecap="butt" stroke-linejoin="miter"><path d="M3 6.9H21M6 12H18M10.2 17.1H13.8"/></svg>
<span class="t" style="left:741.00px;top:98px;font:400 18px/20px 'Liberation Sans',sans-serif;color:var(--title);letter-spacing:0.496px;-webkit-text-stroke:0.45px currentColor;">invoices</span>
<svg class="b" style="left:1109.50px;top:94.40px;color:var(--accent)" width="26" height="26" viewBox="0 0 24 24" fill="none" stroke="var(--accent)" stroke-width="1.45" stroke-linecap="butt" stroke-linejoin="miter"><path d="M5.9 5.6a1.7 1.7 0 0 1 1.7-1.7h8.8a1.7 1.7 0 0 1 1.7 1.7V19.7L12 17 5.9 19.7Z"/></svg>
<svg class="b" style="left:1164.70px;top:94.60px;color:var(--accent)" width="26" height="26" viewBox="0 0 24 24" fill="none" stroke="var(--accent)" stroke-width="1.5" stroke-linecap="butt" stroke-linejoin="miter"><path d="M17.2 6.8A7.3 7.3 0 1 0 19.1 13.8"/><path d="M19.8 4.2V11H13Z" fill="currentColor" stroke="none"/></svg>
<svg class="b" style="left:1219.60px;top:94.20px;color:var(--fg3)" width="26" height="26" viewBox="0 0 24 24" fill="none" stroke="var(--fg3)" stroke-width="1.6" stroke-linecap="butt" stroke-linejoin="miter"><path d="M5.6 5.6 18.4 18.4M18.4 5.6 5.6 18.4"/></svg>
<div class="b" style="left:301px;top:140.2px;width:948.5px;height:169px;background:var(--code);border:1px solid var(--border);border-radius:9px;box-sizing:border-box"></div>
<div class="b" style="left:302px;top:141px;width:946px;height:167px;overflow:hidden;border-radius:8px">
<span class="t" style="left:30.60px;top:47px;font:400 16px/20px 'Liberation Mono',monospace;color:var(--ln);letter-spacing:-0.600px;-webkit-text-stroke:0.3px currentColor;">1</span>
<span class="t" style="left:59.60px;top:47px;font:400 16px/20px 'Liberation Mono',monospace;color:var(--kw);letter-spacing:-0.600px;-webkit-text-stroke:0.3px currentColor;">SELECT</span>
<span class="t" style="left:30.60px;top:70px;font:400 16px/20px 'Liberation Mono',monospace;color:var(--lnact);letter-spacing:-0.600px;-webkit-text-stroke:0.3px currentColor;">2</span>
<span class="t" style="left:77.60px;top:70px;font:400 16px/20px 'Liberation Mono',monospace;color:var(--codefg);letter-spacing:-0.600px;-webkit-text-stroke:0.3px currentColor;">InvoiceId, CustomerId, InvoiceDate, BillingAddress, BillingState, BillingCountry, Total</span>
<div class="b" style="left:60.19999999999999px;top:67px;width:1px;height:22.5px;background:var(--guideact)"></div>
<span class="t" style="left:30.60px;top:92px;font:400 16px/20px 'Liberation Mono',monospace;color:var(--ln);letter-spacing:-0.600px;-webkit-text-stroke:0.3px currentColor;">3</span>
<span class="t" style="left:59.60px;top:92px;font:400 16px/20px 'Liberation Mono',monospace;color:var(--kw);letter-spacing:-0.600px;-webkit-text-stroke:0.3px currentColor;">FROM</span>
<span class="t" style="left:30.60px;top:114px;font:400 16px/20px 'Liberation Mono',monospace;color:var(--ln);letter-spacing:-0.600px;-webkit-text-stroke:0.3px currentColor;">4</span>
<span class="t" style="left:77.60px;top:114px;font:400 16px/20px 'Liberation Mono',monospace;color:var(--codefg);letter-spacing:-0.600px;-webkit-text-stroke:0.3px currentColor;">invoices</span>
<div class="b" style="left:60.19999999999999px;top:113px;width:1px;height:22.5px;background:var(--guide)"></div>
<span class="t" style="left:30.60px;top:137px;font:400 16px/20px 'Liberation Mono',monospace;color:var(--ln);letter-spacing:-0.600px;-webkit-text-stroke:0.3px currentColor;">5</span>
<span class="t" style="left:59.60px;top:137px;font:400 16px/20px 'Liberation Mono',monospace;color:var(--kw);letter-spacing:-0.600px;-webkit-text-stroke:0.3px currentColor;">LIMIT</span>
<span class="t" style="left:30.60px;top:160px;font:400 16px/20px 'Liberation Mono',monospace;color:var(--ln);letter-spacing:-0.600px;-webkit-text-stroke:0.3px currentColor;">6</span>
<span class="t" style="left:77.60px;top:160px;font:400 16px/20px 'Liberation Mono',monospace;color:var(--num);letter-spacing:-0.600px;-webkit-text-stroke:0.3px currentColor;">50</span>
<div class="b" style="left:60.19999999999999px;top:157px;width:1px;height:22.5px;background:var(--guide)"></div>
</div>
<svg class="b" style="left:1213.80px;top:158.50px" width="20" height="20" viewBox="0 0 24 24" fill="var(--fg3)" ><path d="M4 7v2c0 .55-.45 1-1 1H2v4h1c.55 0 1 .45 1 1v2c0 1.65 1.35 3 3 3h3v-2H7c-.55 0-1-.45-1-1v-2c0-1.3-.84-2.42-2-2.83v-.34C5.16 11.42 6 10.3 6 9V7c0-.55.45-1 1-1h3V4H7C5.35 4 4 5.35 4 7zM21 10c-.55 0-1-.45-1-1V7c0-1.65-1.35-3-3-3h-3v2h3c.55 0 1 .45 1 1v2c0 1.3.84 2.42 2 2.83v.34c-1.16.41-2 1.52-2 2.83v2c0 .55-.45 1-1 1h-3v2h3c1.65 0 3-1.35 3-3v-2c0-.55.45-1 1-1h1v-4h-1z"/></svg>
<svg class="b" style="left:1006.50px;top:260.50px" width="25" height="25" viewBox="0 0 24 24" fill="var(--dis)" ><path d="M12.5 8c-2.65 0-5.05.99-6.9 2.6L2 7v9h9l-3.62-3.62c1.39-1.16 3.16-1.88 5.12-1.88 3.54 0 6.55 2.31 7.6 5.5l2.37-.78C21.08 11.03 17.15 8 12.5 8z"/></svg>
<div class="b" style="left:1056.4px;top:251px;width:180.4px;height:44.6px;background:var(--submit);border-radius:9px"></div>
<svg class="b" style="left:1099.00px;top:260.80px" width="25" height="25" viewBox="0 0 24 24" fill="var(--submitfg)" ><path d="M2.01 21L23 12 2.01 3 2 10l15 2-15 2z"/></svg>
<span class="t" style="left:1134.50px;top:264px;font:700 18px/20px 'Liberation Sans',sans-serif;color:var(--submitfg);letter-spacing:-0.416px;">Submit</span>
<svg class="b" style="left:305.75px;top:329.75px" width="20.5" height="20.5" viewBox="0 0 24 24" fill="var(--fg3)" ><path d="M4 9h4v11H4zm12 4h4v7h-4zm-6-9h4v16h-4z"/></svg>
<span class="t" style="left:331.00px;top:331px;font:400 18px/20px 'Liberation Sans',sans-serif;color:var(--fg3);letter-spacing:0.497px;-webkit-text-stroke:0.3px currentColor;">Chart</span>
<svg class="b" style="left:406.30px;top:328.95px;color:var(--fg3)" width="22.4" height="22.4" viewBox="0 0 24 24" fill="none" stroke="var(--fg3)" stroke-width="1.55" stroke-linecap="butt" stroke-linejoin="miter"><rect x="3.75" y="5.75" width="16.5" height="12.5" rx="1.8"/><path d="M9.2 5.75V18.25M14.8 5.75V18.25"/></svg>
<span class="t" style="left:432.50px;top:331px;font:400 18px/20px 'Liberation Sans',sans-serif;color:var(--fg3);letter-spacing:0.354px;-webkit-text-stroke:0.3px currentColor;">Columns</span>
<svg class="b" style="left:0;top:0" width="1281" height="815" viewBox="0 0 1281 815"><rect x="397.20" y="380.4" width="1.6" height="440" fill="var(--gridv)"/><rect x="509.60" y="380.4" width="1.6" height="440" fill="var(--gridv)"/><rect x="723.30" y="380.4" width="1.6" height="440" fill="var(--gridv)"/><rect x="903.50" y="380.4" width="1.6" height="440" fill="var(--gridv)"/><rect x="1015.75" y="380.4" width="1.6" height="440" fill="var(--gridv)"/><rect x="1128.10" y="380.4" width="1.6" height="440" fill="var(--gridv)"/><rect x="1240.90" y="380.4" width="1.6" height="440" fill="var(--gridv)"/><rect x="286" y="379.80" width="978.6" height="1.3" fill="var(--grid)"/><rect x="286" y="418.80" width="978.6" height="1.3" fill="var(--grid)"/><rect x="286" y="453.55" width="978.6" height="1.3" fill="var(--grid)"/><rect x="286" y="492.29" width="978.6" height="1.3" fill="var(--grid)"/><rect x="286" y="531.03" width="978.6" height="1.3" fill="var(--grid)"/><rect x="286" y="569.77" width="978.6" height="1.3" fill="var(--grid)"/><rect x="286" y="608.51" width="978.6" height="1.3" fill="var(--grid)"/><rect x="286" y="647.25" width="978.6" height="1.3" fill="var(--grid)"/><rect x="286" y="685.99" width="978.6" height="1.3" fill="var(--grid)"/><rect x="286" y="724.73" width="978.6" height="1.3" fill="var(--grid)"/><rect x="286" y="763.47" width="978.6" height="1.3" fill="var(--grid)"/><rect x="286" y="802.21" width="978.6" height="1.3" fill="var(--grid)"/><rect x="286" y="840.95" width="978.6" height="1.3" fill="var(--grid)"/></svg>
<span class="t" style="left:304.80px;top:391px;font:400 16px/20px 'Liberation Mono',monospace;color:var(--hdr);letter-spacing:-0.600px;-webkit-text-stroke:0.3px currentColor;">InvoiceId</span>
<span class="t" style="left:407.70px;top:391px;font:400 16px/20px 'Liberation Mono',monospace;color:var(--hdr);letter-spacing:-0.600px;-webkit-text-stroke:0.3px currentColor;">CustomerId</span>
<span class="t" style="left:520.50px;top:391px;font:400 16px/20px 'Liberation Mono',monospace;color:var(--hdr);letter-spacing:-0.600px;-webkit-text-stroke:0.3px currentColor;">InvoiceDate</span>
<span class="t" style="left:734.20px;top:391px;font:400 16px/20px 'Liberation Mono',monospace;color:var(--hdr);letter-spacing:-0.600px;-webkit-text-stroke:0.3px currentColor;">BillingAddress</span>
<span class="t" style="left:914.00px;top:391px;font:400 16px/20px 'Liberation Mono',monospace;color:var(--hdr);letter-spacing:-0.600px;-webkit-text-stroke:0.3px currentColor;">BillingSt…</span>
<span class="t" style="left:1026.40px;top:391px;font:400 16px/20px 'Liberation Mono',monospace;color:var(--hdr);letter-spacing:-0.600px;-webkit-text-stroke:0.3px currentColor;">BillingCo…</span>
<span class="t" style="left:1139.00px;top:391px;font:400 16px/20px 'Liberation Mono',monospace;color:var(--hdr);letter-spacing:-0.600px;-webkit-text-stroke:0.3px currentColor;">Total</span>
<span class="t" style="left:304.80px;top:426px;font:400 16px/20px 'Liberation Mono',monospace;color:var(--id);letter-spacing:-0.600px;-webkit-text-stroke:0.3px currentColor;">1</span>
<span class="t" style="left:407.70px;top:426px;font:400 16px/20px 'Liberation Mono',monospace;color:var(--fk);letter-spacing:-0.600px;-webkit-text-stroke:0.3px currentColor;">2</span>
<svg class="b" style="left:480.60px;top:425.20px;color:var(--fg3)" width="20" height="20" viewBox="0 0 24 24" fill="none" stroke="var(--fg3)" stroke-width="1.6" stroke-linecap="butt" stroke-linejoin="miter"><path d="M4.5 12H19M12.4 5.2 19.2 12 12.4 18.8"/></svg>
<span class="t" style="left:520.50px;top:426px;font:400 16px/20px 'Liberation Mono',monospace;color:var(--date);letter-spacing:-0.600px;-webkit-text-stroke:0.3px currentColor;">2009-01-01 00:00:00</span>
<span class="t" style="left:734.60px;top:425px;font:400 15.5px/20px 'Liberation Sans',sans-serif;color:var(--cell);letter-spacing:0.162px;-webkit-text-stroke:0.2px currentColor;">Theodor-Heuss-Stra…</span>
<span class="t" style="left:914.00px;top:426px;font:400 16px/20px 'Liberation Mono',monospace;color:var(--null);letter-spacing:-0.600px;-webkit-text-stroke:0.3px currentColor;">NULL</span>
<span class="t" style="left:1027.00px;top:425px;font:400 15.5px/20px 'Liberation Sans',sans-serif;color:var(--cell);letter-spacing:0.037px;-webkit-text-stroke:0.2px currentColor;">Germany</span>
<span class="t" style="left:1139.00px;top:426px;font:400 16px/20px 'Liberation Mono',monospace;color:var(--money);letter-spacing:-0.600px;-webkit-text-stroke:0.3px currentColor;">1.98</span>
<span class="t" style="left:304.80px;top:465px;font:400 16px/20px 'Liberation Mono',monospace;color:var(--id);letter-spacing:-0.600px;-webkit-text-stroke:0.3px currentColor;">2</span>
<span class="t" style="left:407.70px;top:465px;font:400 16px/20px 'Liberation Mono',monospace;color:var(--fk);letter-spacing:-0.600px;-webkit-text-stroke:0.3px currentColor;">4</span>
<svg class="b" style="left:480.60px;top:463.94px;color:var(--fg3)" width="20" height="20" viewBox="0 0 24 24" fill="none" stroke="var(--fg3)" stroke-width="1.6" stroke-linecap="butt" stroke-linejoin="miter"><path d="M4.5 12H19M12.4 5.2 19.2 12 12.4 18.8"/></svg>
<span class="t" style="left:520.50px;top:465px;font:400 16px/20px 'Liberation Mono',monospace;color:var(--date);letter-spacing:-0.600px;-webkit-text-stroke:0.3px currentColor;">2009-01-02 00:00:00</span>
<span class="t" style="left:734.60px;top:464px;font:400 15.5px/20px 'Liberation Sans',sans-serif;color:var(--cell);letter-spacing:-0.017px;-webkit-text-stroke:0.2px currentColor;">Ullevålsveien 14</span>
<span class="t" style="left:914.00px;top:465px;font:400 16px/20px 'Liberation Mono',monospace;color:var(--null);letter-spacing:-0.600px;-webkit-text-stroke:0.3px currentColor;">NULL</span>
<span class="t" style="left:1027.00px;top:464px;font:400 15.5px/20px 'Liberation Sans',sans-serif;color:var(--cell);letter-spacing:0.310px;-webkit-text-stroke:0.2px currentColor;">Norway</span>
<span class="t" style="left:1139.00px;top:465px;font:400 16px/20px 'Liberation Mono',monospace;color:var(--money);letter-spacing:-0.600px;-webkit-text-stroke:0.3px currentColor;">3.96</span>
<span class="t" style="left:304.80px;top:504px;font:400 16px/20px 'Liberation Mono',monospace;color:var(--id);letter-spacing:-0.600px;-webkit-text-stroke:0.3px currentColor;">3</span>
<span class="t" style="left:407.70px;top:504px;font:400 16px/20px 'Liberation Mono',monospace;color:var(--fk);letter-spacing:-0.600px;-webkit-text-stroke:0.3px currentColor;">8</span>
<svg class="b" style="left:480.60px;top:502.68px;color:var(--fg3)" width="20" height="20" viewBox="0 0 24 24" fill="none" stroke="var(--fg3)" stroke-width="1.6" stroke-linecap="butt" stroke-linejoin="miter"><path d="M4.5 12H19M12.4 5.2 19.2 12 12.4 18.8"/></svg>
<span class="t" style="left:520.50px;top:504px;font:400 16px/20px 'Liberation Mono',monospace;color:var(--date);letter-spacing:-0.600px;-webkit-text-stroke:0.3px currentColor;">2009-01-03 00:00:00</span>
<span class="t" style="left:734.60px;top:503px;font:400 15.5px/20px 'Liberation Sans',sans-serif;color:var(--cell);letter-spacing:0.229px;-webkit-text-stroke:0.2px currentColor;">Grétrystraat 63</span>
<span class="t" style="left:914.00px;top:504px;font:400 16px/20px 'Liberation Mono',monospace;color:var(--null);letter-spacing:-0.600px;-webkit-text-stroke:0.3px currentColor;">NULL</span>
<span class="t" style="left:1027.00px;top:503px;font:400 15.5px/20px 'Liberation Sans',sans-serif;color:var(--cell);letter-spacing:0.043px;-webkit-text-stroke:0.2px currentColor;">Belgium</span>
<span class="t" style="left:1139.00px;top:504px;font:400 16px/20px 'Liberation Mono',monospace;color:var(--money);letter-spacing:-0.600px;-webkit-text-stroke:0.3px currentColor;">5.94</span>
<span class="t" style="left:304.80px;top:542px;font:400 16px/20px 'Liberation Mono',monospace;color:var(--id);letter-spacing:-0.600px;-webkit-text-stroke:0.3px currentColor;">4</span>
<span class="t" style="left:407.70px;top:542px;font:400 16px/20px 'Liberation Mono',monospace;color:var(--fk);letter-spacing:-0.600px;-webkit-text-stroke:0.3px currentColor;">14</span>
<svg class="b" style="left:480.60px;top:541.42px;color:var(--fg3)" width="20" height="20" viewBox="0 0 24 24" fill="none" stroke="var(--fg3)" stroke-width="1.6" stroke-linecap="butt" stroke-linejoin="miter"><path d="M4.5 12H19M12.4 5.2 19.2 12 12.4 18.8"/></svg>
<span class="t" style="left:520.50px;top:542px;font:400 16px/20px 'Liberation Mono',monospace;color:var(--date);letter-spacing:-0.600px;-webkit-text-stroke:0.3px currentColor;">2009-01-06 00:00:00</span>
<span class="t" style="left:734.60px;top:541px;font:400 15.5px/20px 'Liberation Sans',sans-serif;color:var(--cell);letter-spacing:-0.494px;-webkit-text-stroke:0.2px currentColor;">8210 111 ST NW</span>
<span class="t" style="left:914.30px;top:541px;font:400 15.5px/20px 'Liberation Sans',sans-serif;color:var(--cell);letter-spacing:-0.238px;-webkit-text-stroke:0.2px currentColor;">AB</span>
<span class="t" style="left:1027.00px;top:541px;font:400 15.5px/20px 'Liberation Sans',sans-serif;color:var(--cell);letter-spacing:-0.083px;-webkit-text-stroke:0.2px currentColor;">Canada</span>
<span class="t" style="left:1139.00px;top:542px;font:400 16px/20px 'Liberation Mono',monospace;color:var(--money);letter-spacing:-0.600px;-webkit-text-stroke:0.3px currentColor;">8.91</span>
<span class="t" style="left:304.80px;top:581px;font:400 16px/20px 'Liberation Mono',monospace;color:var(--id);letter-spacing:-0.600px;-webkit-text-stroke:0.3px currentColor;">5</span>
<span class="t" style="left:407.70px;top:581px;font:400 16px/20px 'Liberation Mono',monospace;color:var(--fk);letter-spacing:-0.600px;-webkit-text-stroke:0.3px currentColor;">23</span>
<svg class="b" style="left:480.60px;top:580.16px;color:var(--fg3)" width="20" height="20" viewBox="0 0 24 24" fill="none" stroke="var(--fg3)" stroke-width="1.6" stroke-linecap="butt" stroke-linejoin="miter"><path d="M4.5 12H19M12.4 5.2 19.2 12 12.4 18.8"/></svg>
<span class="t" style="left:520.50px;top:581px;font:400 16px/20px 'Liberation Mono',monospace;color:var(--date);letter-spacing:-0.600px;-webkit-text-stroke:0.3px currentColor;">2009-01-11 00:00:00</span>
<span class="t" style="left:734.60px;top:580px;font:400 15.5px/20px 'Liberation Sans',sans-serif;color:var(--cell);letter-spacing:0.097px;-webkit-text-stroke:0.2px currentColor;">69 Salem Street</span>
<span class="t" style="left:914.30px;top:580px;font:400 15.5px/20px 'Liberation Sans',sans-serif;color:var(--cell);letter-spacing:0.225px;-webkit-text-stroke:0.2px currentColor;">MA</span>
<span class="t" style="left:1027.00px;top:580px;font:400 15.5px/20px 'Liberation Sans',sans-serif;color:var(--cell);letter-spacing:-0.490px;-webkit-text-stroke:0.2px currentColor;">USA</span>
<span class="t" style="left:1139.00px;top:581px;font:400 16px/20px 'Liberation Mono',monospace;color:var(--money);letter-spacing:-0.600px;-webkit-text-stroke:0.3px currentColor;">13.86</span>
<span class="t" style="left:304.80px;top:620px;font:400 16px/20px 'Liberation Mono',monospace;color:var(--id);letter-spacing:-0.600px;-webkit-text-stroke:0.3px currentColor;">6</span>
<span class="t" style="left:407.70px;top:620px;font:400 16px/20px 'Liberation Mono',monospace;color:var(--fk);letter-spacing:-0.600px;-webkit-text-stroke:0.3px currentColor;">37</span>
<svg class="b" style="left:480.60px;top:618.90px;color:var(--fg3)" width="20" height="20" viewBox="0 0 24 24" fill="none" stroke="var(--fg3)" stroke-width="1.6" stroke-linecap="butt" stroke-linejoin="miter"><path d="M4.5 12H19M12.4 5.2 19.2 12 12.4 18.8"/></svg>
<span class="t" style="left:520.50px;top:620px;font:400 16px/20px 'Liberation Mono',monospace;color:var(--date);letter-spacing:-0.600px;-webkit-text-stroke:0.3px currentColor;">2009-01-19 00:00:00</span>
<span class="t" style="left:734.60px;top:619px;font:400 15.5px/20px 'Liberation Sans',sans-serif;color:var(--cell);letter-spacing:-0.093px;-webkit-text-stroke:0.2px currentColor;">Berger Straße 10</span>
<span class="t" style="left:914.00px;top:620px;font:400 16px/20px 'Liberation Mono',monospace;color:var(--null);letter-spacing:-0.600px;-webkit-text-stroke:0.3px currentColor;">NULL</span>
<span class="t" style="left:1027.00px;top:619px;font:400 15.5px/20px 'Liberation Sans',sans-serif;color:var(--cell);letter-spacing:0.037px;-webkit-text-stroke:0.2px currentColor;">Germany</span>
<span class="t" style="left:1139.00px;top:620px;font:400 16px/20px 'Liberation Mono',monospace;color:var(--money);letter-spacing:-0.600px;-webkit-text-stroke:0.3px currentColor;">0.99</span>
<span class="t" style="left:304.80px;top:659px;font:400 16px/20px 'Liberation Mono',monospace;color:var(--id);letter-spacing:-0.600px;-webkit-text-stroke:0.3px currentColor;">7</span>
<span class="t" style="left:407.70px;top:659px;font:400 16px/20px 'Liberation Mono',monospace;color:var(--fk);letter-spacing:-0.600px;-webkit-text-stroke:0.3px currentColor;">38</span>
<svg class="b" style="left:480.60px;top:657.64px;color:var(--fg3)" width="20" height="20" viewBox="0 0 24 24" fill="none" stroke="var(--fg3)" stroke-width="1.6" stroke-linecap="butt" stroke-linejoin="miter"><path d="M4.5 12H19M12.4 5.2 19.2 12 12.4 18.8"/></svg>
<span class="t" style="left:520.50px;top:659px;font:400 16px/20px 'Liberation Mono',monospace;color:var(--date);letter-spacing:-0.600px;-webkit-text-stroke:0.3px currentColor;">2009-02-01 00:00:00</span>
<span class="t" style="left:734.60px;top:658px;font:400 15.5px/20px 'Liberation Sans',sans-serif;color:var(--cell);letter-spacing:-0.023px;-webkit-text-stroke:0.2px currentColor;">Barbarossastraße 19</span>
<span class="t" style="left:914.00px;top:659px;font:400 16px/20px 'Liberation Mono',monospace;color:var(--null);letter-spacing:-0.600px;-webkit-text-stroke:0.3px currentColor;">NULL</span>
<span class="t" style="left:1027.00px;top:658px;font:400 15.5px/20px 'Liberation Sans',sans-serif;color:var(--cell);letter-spacing:0.037px;-webkit-text-stroke:0.2px currentColor;">Germany</span>
<span class="t" style="left:1139.00px;top:659px;font:400 16px/20px 'Liberation Mono',monospace;color:var(--money);letter-spacing:-0.600px;-webkit-text-stroke:0.3px currentColor;">1.98</span>
<span class="t" style="left:304.80px;top:697px;font:400 16px/20px 'Liberation Mono',monospace;color:var(--id);letter-spacing:-0.600px;-webkit-text-stroke:0.3px currentColor;">8</span>
<span class="t" style="left:407.70px;top:697px;font:400 16px/20px 'Liberation Mono',monospace;color:var(--fk);letter-spacing:-0.600px;-webkit-text-stroke:0.3px currentColor;">40</span>
<svg class="b" style="left:480.60px;top:696.38px;color:var(--fg3)" width="20" height="20" viewBox="0 0 24 24" fill="none" stroke="var(--fg3)" stroke-width="1.6" stroke-linecap="butt" stroke-linejoin="miter"><path d="M4.5 12H19M12.4 5.2 19.2 12 12.4 18.8"/></svg>
<span class="t" style="left:520.50px;top:697px;font:400 16px/20px 'Liberation Mono',monospace;color:var(--date);letter-spacing:-0.600px;-webkit-text-stroke:0.3px currentColor;">2009-02-01 00:00:00</span>
<span class="t" style="left:734.60px;top:696px;font:400 15.5px/20px 'Liberation Sans',sans-serif;color:var(--cell);letter-spacing:-0.054px;-webkit-text-stroke:0.2px currentColor;">8, Rue Hanovre</span>
<span class="t" style="left:914.00px;top:697px;font:400 16px/20px 'Liberation Mono',monospace;color:var(--null);letter-spacing:-0.600px;-webkit-text-stroke:0.3px currentColor;">NULL</span>
<span class="t" style="left:1027.00px;top:696px;font:400 15.5px/20px 'Liberation Sans',sans-serif;color:var(--cell);letter-spacing:-0.040px;-webkit-text-stroke:0.2px currentColor;">France</span>
<span class="t" style="left:1139.00px;top:697px;font:400 16px/20px 'Liberation Mono',monospace;color:var(--money);letter-spacing:-0.600px;-webkit-text-stroke:0.3px currentColor;">1.98</span>
<span class="t" style="left:304.80px;top:736px;font:400 16px/20px 'Liberation Mono',monospace;color:var(--id);letter-spacing:-0.600px;-webkit-text-stroke:0.3px currentColor;">9</span>
<span class="t" style="left:407.70px;top:736px;font:400 16px/20px 'Liberation Mono',monospace;color:var(--fk);letter-spacing:-0.600px;-webkit-text-stroke:0.3px currentColor;">42</span>
<svg class="b" style="left:480.60px;top:735.12px;color:var(--fg3)" width="20" height="20" viewBox="0 0 24 24" fill="none" stroke="var(--fg3)" stroke-width="1.6" stroke-linecap="butt" stroke-linejoin="miter"><path d="M4.5 12H19M12.4 5.2 19.2 12 12.4 18.8"/></svg>
<span class="t" style="left:520.50px;top:736px;font:400 16px/20px 'Liberation Mono',monospace;color:var(--date);letter-spacing:-0.600px;-webkit-text-stroke:0.3px currentColor;">2009-02-02 00:00:00</span>
<span class="t" style="left:734.60px;top:735px;font:400 15.5px/20px 'Liberation Sans',sans-serif;color:var(--cell);letter-spacing:0.097px;-webkit-text-stroke:0.2px currentColor;">9, Place Louis Barthou</span>
<span class="t" style="left:914.00px;top:736px;font:400 16px/20px 'Liberation Mono',monospace;color:var(--null);letter-spacing:-0.600px;-webkit-text-stroke:0.3px currentColor;">NULL</span>
<span class="t" style="left:1027.00px;top:735px;font:400 15.5px/20px 'Liberation Sans',sans-serif;color:var(--cell);letter-spacing:-0.040px;-webkit-text-stroke:0.2px currentColor;">France</span>
<span class="t" style="left:1139.00px;top:736px;font:400 16px/20px 'Liberation Mono',monospace;color:var(--money);letter-spacing:-0.600px;-webkit-text-stroke:0.3px currentColor;">3.96</span>
<span class="t" style="left:304.80px;top:775px;font:400 16px/20px 'Liberation Mono',monospace;color:var(--id);letter-spacing:-0.600px;-webkit-text-stroke:0.3px currentColor;">10</span>
<span class="t" style="left:407.70px;top:775px;font:400 16px/20px 'Liberation Mono',monospace;color:var(--fk);letter-spacing:-0.600px;-webkit-text-stroke:0.3px currentColor;">46</span>
<svg class="b" style="left:480.60px;top:773.86px;color:var(--fg3)" width="20" height="20" viewBox="0 0 24 24" fill="none" stroke="var(--fg3)" stroke-width="1.6" stroke-linecap="butt" stroke-linejoin="miter"><path d="M4.5 12H19M12.4 5.2 19.2 12 12.4 18.8"/></svg>
<span class="t" style="left:520.50px;top:775px;font:400 16px/20px 'Liberation Mono',monospace;color:var(--date);letter-spacing:-0.600px;-webkit-text-stroke:0.3px currentColor;">2009-02-03 00:00:00</span>
<span class="t" style="left:734.60px;top:774px;font:400 15.5px/20px 'Liberation Sans',sans-serif;color:var(--cell);letter-spacing:0.126px;-webkit-text-stroke:0.2px currentColor;">3 Chatham Street</span>
<span class="t" style="left:914.30px;top:774px;font:400 15.5px/20px 'Liberation Sans',sans-serif;color:var(--cell);letter-spacing:0.143px;-webkit-text-stroke:0.2px currentColor;">Dublin</span>
<span class="t" style="left:1027.00px;top:774px;font:400 15.5px/20px 'Liberation Sans',sans-serif;color:var(--cell);letter-spacing:0.001px;-webkit-text-stroke:0.2px currentColor;">Ireland</span>
<span class="t" style="left:1139.00px;top:775px;font:400 16px/20px 'Liberation Mono',monospace;color:var(--money);letter-spacing:-0.600px;-webkit-text-stroke:0.3px currentColor;">5.94</span>
<div class="b" style="left:1279.8px;top:0px;width:1.3px;height:815px;background:var(--redge)"></div>
<div class="b" style="left:0px;top:813.9px;width:1281px;height:1.2px;background:var(--bottom)"></div>
</div>
</body></html>
